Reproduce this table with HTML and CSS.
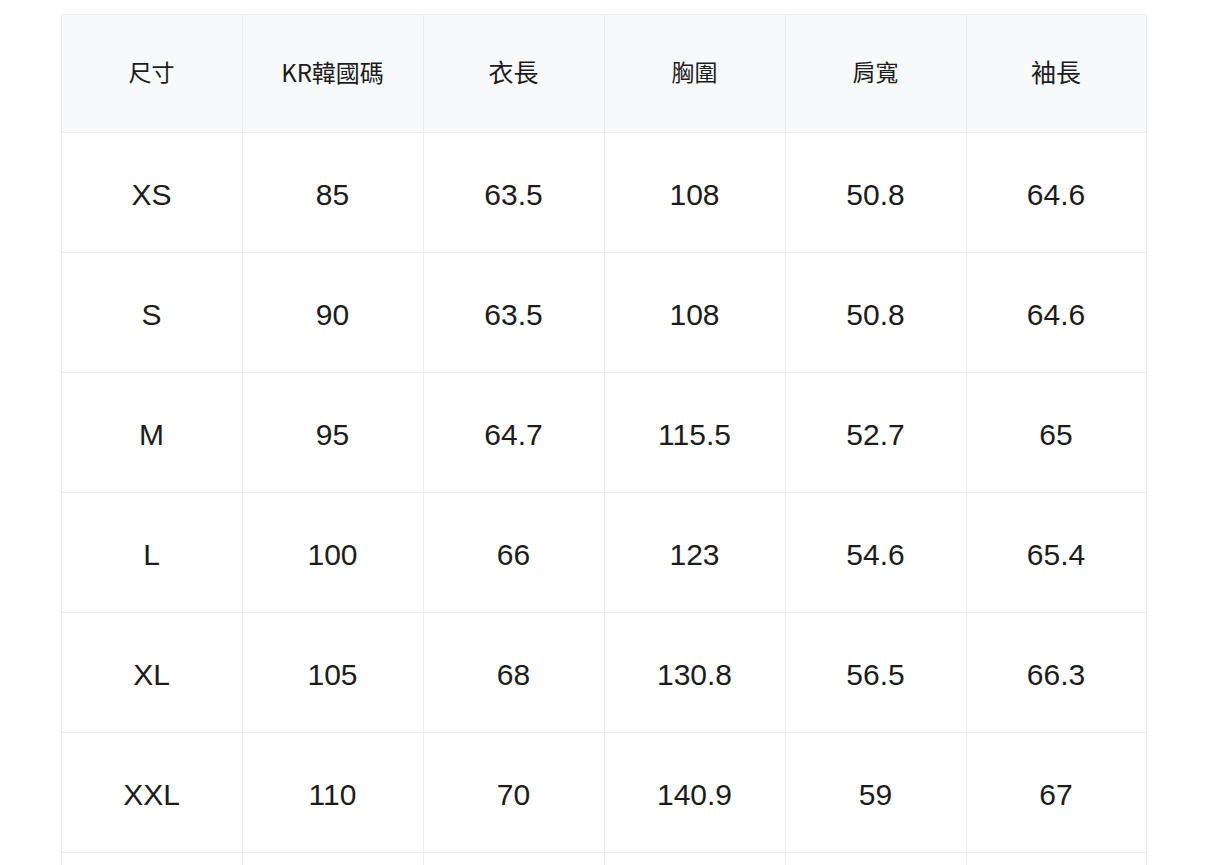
FILE: index.html
```html
<!DOCTYPE html>
<html lang="zh-Hant">
<head>
<meta charset="utf-8">
<title>尺寸表</title>
<link rel="stylesheet" href="styles.css">
</head>
<body>
<div class="wrap">
<table class="size-table">
<colgroup>
<col class="c"><col class="c"><col class="c"><col class="c"><col class="c"><col class="c last">
</colgroup>
<thead>
<tr>
<th class="h-sm">尺寸</th>
<th class="h-md">KR韓國碼</th>
<th class="h-lg">衣長</th>
<th class="h-sm">胸圍</th>
<th class="h-sm">肩寬</th>
<th class="h-lg">袖長</th>
</tr>
</thead>
<tbody>
<tr><td>XS</td><td>85</td><td>63.5</td><td>108</td><td>50.8</td><td>64.6</td></tr>
<tr><td>S</td><td>90</td><td>63.5</td><td>108</td><td>50.8</td><td>64.6</td></tr>
<tr><td>M</td><td>95</td><td>64.7</td><td>115.5</td><td>52.7</td><td>65</td></tr>
<tr><td>L</td><td>100</td><td>66</td><td>123</td><td>54.6</td><td>65.4</td></tr>
<tr><td>XL</td><td>105</td><td>68</td><td>130.8</td><td>56.5</td><td>66.3</td></tr>
<tr><td>XXL</td><td>110</td><td>70</td><td>140.9</td><td>59</td><td>67</td></tr>
<tr class="partial"><td></td><td></td><td></td><td></td><td></td><td></td></tr>
</tbody>
</table>
</div>
</body>
</html>
```
FILE: styles.css
```css
html, body {
  margin: 0;
  padding: 0;
  background: #ffffff;
}
.wrap {
  padding: 14px 0 0 61px;
}
.size-table {
  border-collapse: collapse;
  table-layout: fixed;
  width: 1085px;
  font-family: "Liberation Sans", "Noto Sans CJK TC", sans-serif;
  color: #1c1c1c;
}
.size-table col.c {
  width: 181px;
}
.size-table col.last {
  width: 180px;
}
.size-table th,
.size-table td {
  border: 1px solid #ececec;
  text-align: center;
  vertical-align: middle;
  padding: 0 1px 0 0;
}
.size-table th {
  height: 112px;
  padding-bottom: 5px;
  background: #f8f9fb;
  font-weight: 400;
  font-family: "Noto Sans CJK TC", "Liberation Sans", sans-serif;
  color: #1c1c1c;
}
.size-table td {
  height: 115px;
  padding-top: 4px;
  font-size: 30px;
}
.size-table .partial td {
  height: 60px;
}
.h-sm { font-size: 23px; }
.h-md {
  font-size: 24px;
  font-family: "Liberation Sans", "Noto Sans CJK TC", sans-serif;
}
.h-lg { font-size: 25px; }
```
